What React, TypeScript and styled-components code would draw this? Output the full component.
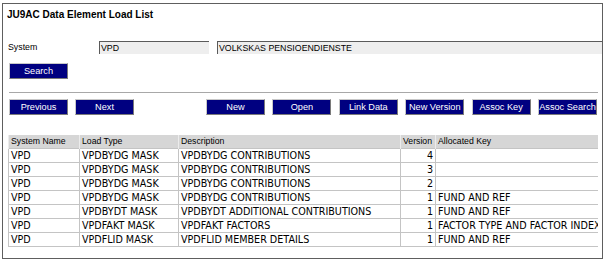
import React from "react";
import styled, { createGlobalStyle } from "styled-components";

const Global = createGlobalStyle`
  html, body { margin: 0; padding: 0; background: #ffffff; }
  body { font-family: "Liberation Sans", Arial, sans-serif; }
`;

const Frame = styled.div`
  box-sizing: border-box;
  margin: 3px 0 0 2px;
  width: 601px;
  height: 256px;
  border: 1px solid #5e5e5e;
  background: #ffffff;
  display: flex;
  flex-direction: column;
  overflow: hidden;
`;

const Title = styled.div`
  margin: 4px 0 0 4px;
  height: 13px;
  line-height: 13px;
  font-family: "Liberation Sans", Arial, sans-serif;
  font-weight: bold;
  font-size: 10px;
  color: #000;
`;

const SystemRow = styled.div`
  display: flex;
  align-items: stretch;
  margin-top: 20px;
  height: 13px;
`;

const Label = styled.div`
  width: 91px;
  padding-left: 5px;
  font-size: 8.8px;
  line-height: 13px;
  color: #000;
`;

const Field = styled.div<{ $w?: number }>`
  box-sizing: border-box;
  ${(p) => (p.$w ? `width: ${p.$w}px;` : "flex: 1;")}
  margin-right: ${(p) => (p.$w ? 8 : 0)}px;
  background: #eeeeee;
  border-top: 1px solid #5a5a5a;
  border-left: 1px solid #5a5a5a;
  padding-left: 1px;
  font-size: 8.8px;
  line-height: 12px;
  color: #000;
  white-space: nowrap;
`;

const NavyButton = styled.button`
  box-sizing: border-box;
  width: 59px;
  height: 16px;
  padding: 0;
  background: #000080;
  border: 1px solid;
  border-color: #c8c8c8 #7a7a7a #7a7a7a #c8c8c8;
  color: #ffffff;
  font-family: "Liberation Sans", Arial, sans-serif;
  font-size: 9.2px;
  line-height: 14px;
  text-align: center;
  white-space: nowrap;
  overflow: hidden;
  cursor: pointer;
`;

const SearchWrap = styled.div`
  margin: 9px 0 0 6px;
  display: flex;
`;

const Separator = styled.div`
  margin: 13px 4px 0 6px;
  height: 1px;
  background: #a8a8a8;
`;

const ButtonBar = styled.div`
  display: flex;
  justify-content: space-between;
  margin: 6px 5px 0 6px;
`;

const ButtonGroup = styled.div<{ $gap: number }>`
  display: flex;
  gap: ${(p) => p.$gap}px;
`;

const TableWrap = styled.div`
  margin: 20px 0 0 5px;
  width: 590px;
  height: 117px;
  overflow: hidden;
`;

const Grid = styled.table`
  border-collapse: collapse;
  table-layout: fixed;
  width: 590px;
`;

const HeadCell = styled.th`
  height: 13px;
  padding: 0 0 0 2px;
  background: #d6d6d6;
  border-left: 1px solid #ececec;
  font-family: "Liberation Sans", Arial, sans-serif;
  font-weight: normal;
  font-size: 8.7px;
  line-height: 13px;
  text-align: left;
  color: #000;
  white-space: nowrap;
  overflow: hidden;
`;

const Cell = styled.td<{ $right?: boolean }>`
  height: 13px;
  padding: 0 ${(p) => (p.$right ? 2 : 0)}px 0 ${(p) => (p.$right ? 0 : 2)}px;
  border: 1px solid #c4c4c4;
  background: #ffffff;
  font-family: "DejaVu Sans", Verdana, sans-serif;
  font-size: 9.6px;
  line-height: 13px;
  text-align: ${(p) => (p.$right ? "right" : "left")};
  color: #000;
  white-space: nowrap;
  overflow: hidden;
  text-overflow: clip;
`;

const columns = [
  { name: "System Name", w: 71 },
  { name: "Load Type", w: 99 },
  { name: "Description", w: 222 },
  { name: "Version", w: 35 },
  { name: "Allocated Key", w: 163 },
];

const rows = [
  ["VPD", "VPDBYDG MASK", "VPDBYDG CONTRIBUTIONS", "4", ""],
  ["VPD", "VPDBYDG MASK", "VPDBYDG CONTRIBUTIONS", "3", ""],
  ["VPD", "VPDBYDG MASK", "VPDBYDG CONTRIBUTIONS", "2", ""],
  ["VPD", "VPDBYDG MASK", "VPDBYDG CONTRIBUTIONS", "1", "FUND AND REF"],
  ["VPD", "VPDBYDT MASK", "VPDBYDT ADDITIONAL CONTRIBUTIONS", "1", "FUND AND REF"],
  ["VPD", "VPDFAKT MASK", "VPDFAKT FACTORS", "1", "FACTOR TYPE AND FACTOR INDEX"],
  ["VPD", "VPDFLID MASK", "VPDFLID MEMBER DETAILS", "1", "FUND AND REF"],
];

export default function App() {
  return (
    <>
      <Global />
      <Frame>
        <Title>JU9AC Data Element Load List</Title>
        <SystemRow>
          <Label>System</Label>
          <Field $w={110}>VPD</Field>
          <Field>VOLKSKAS PENSIOENDIENSTE</Field>
        </SystemRow>
        <SearchWrap>
          <NavyButton>Search</NavyButton>
        </SearchWrap>
        <Separator />
        <ButtonBar>
          <ButtonGroup $gap={7}>
            <NavyButton>Previous</NavyButton>
            <NavyButton>Next</NavyButton>
          </ButtonGroup>
          <ButtonGroup $gap={7.4}>
            <NavyButton>New</NavyButton>
            <NavyButton>Open</NavyButton>
            <NavyButton>Link Data</NavyButton>
            <NavyButton>New Version</NavyButton>
            <NavyButton>Assoc Key</NavyButton>
            <NavyButton>Assoc Search</NavyButton>
          </ButtonGroup>
        </ButtonBar>
        <TableWrap>
          <Grid>
            <colgroup>
              {columns.map((c) => (
                <col key={c.name} style={{ width: c.w }} />
              ))}
            </colgroup>
            <thead>
              <tr>
                {columns.map((c) => (
                  <HeadCell key={c.name}>{c.name}</HeadCell>
                ))}
              </tr>
            </thead>
            <tbody>
              {rows.map((r, i) => (
                <tr key={i}>
                  {r.map((v, j) => (
                    <Cell key={j} $right={j === 3}>
                      {v}
                    </Cell>
                  ))}
                </tr>
              ))}
            </tbody>
          </Grid>
        </TableWrap>
      </Frame>
    </>
  );
}
